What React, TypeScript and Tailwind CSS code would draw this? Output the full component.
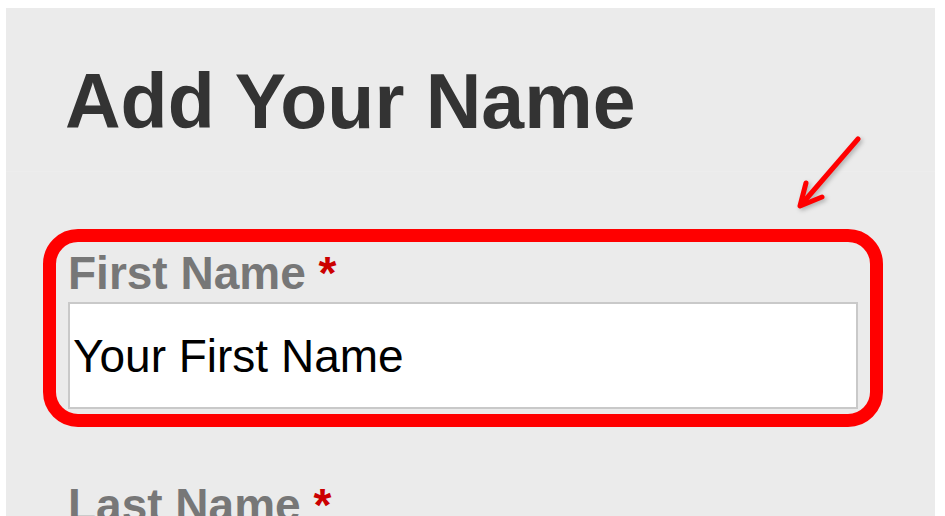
export default function App() {
  return (
    <div className="relative h-[516px] w-[945px] overflow-hidden bg-white font-['Liberation_Sans',Arial,sans-serif]">
      <div className="ml-[6px] mt-[8px] min-h-[508px] w-[929px] bg-[#ebebeb]">
        <div className="h-[164px] border-b border-[#ededed] pl-[59px] pt-[55px]">
          <h1 className="text-[77px] font-bold leading-none text-[#333333]">Add Your Name</h1>
        </div>

        <div className="pl-[62px] pt-[78px]">
          <div className="relative w-[790px]">
            <label className="block text-[46px] font-bold leading-none text-[#777777]">
              First Name <span className="text-[#cc0000]">*</span>
            </label>
            <input
              readOnly
              value="Your First Name"
              className="mt-[6px] h-[107px] w-[790px] border-2 border-[#c9c9c9] bg-white px-[3px] text-[46px] leading-none text-black outline-none"
            />
            {/* annotation box */}
            <div className="pointer-events-none absolute -bottom-[18px] -left-[25px] -right-[25px] -top-[21px] rounded-[35px] border-[13px] border-[#ff0000]" />
          </div>

          <label className="mt-[73px] block text-[46px] font-bold leading-none text-[#777777]">
            Last Name <span className="text-[#cc0000]">*</span>
          </label>
        </div>
      </div>

      {/* annotation arrow */}
      <svg
        className="pointer-events-none absolute left-0 top-0"
        width="945"
        height="516"
        style={{ filter: "drop-shadow(2px 2px 2px rgba(0,0,0,0.25))" }}
      >
        <g stroke="#ff0000" strokeWidth="5" strokeLinecap="round" strokeLinejoin="round" fill="none">
          <line x1="858" y1="139" x2="801" y2="205" />
          <polyline points="806,183 800,206 822,197" />
        </g>
      </svg>
    </div>
  );
}
